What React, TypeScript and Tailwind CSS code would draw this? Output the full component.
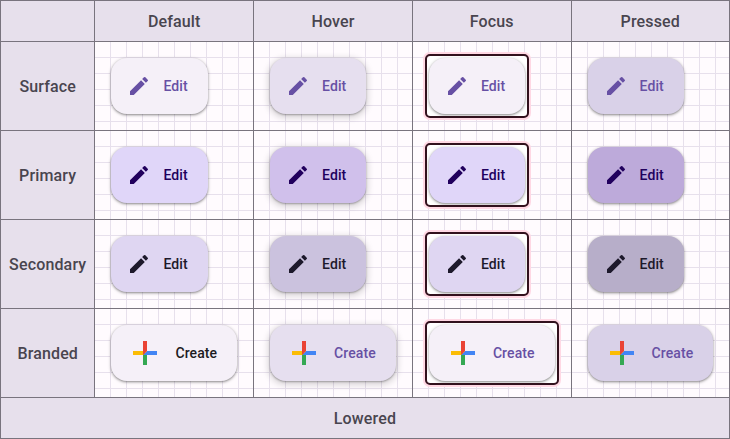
import React from "react";

type Variant = { row: string; bg: string[]; text: string[]; label: string; branded?: boolean };

const states = ["Default", "Hover", "Focus", "Pressed"];
const lowered = "shadow-[0_1px_2px_0_rgba(0,0,0,0.3),0_1px_3px_1px_rgba(0,0,0,0.15)]";
const raised = "shadow-[0_1px_2px_0_rgba(0,0,0,0.3),0_2px_6px_2px_rgba(0,0,0,0.15)]";
const purple = "text-[#6750a4]";
const deep = "text-[#21005d]";
const dark = "text-[#1d192b]";
const ink = "text-[#1c1b1f]";

const variants: Variant[] = [
  { row: "Surface", label: "Edit", bg: ["bg-[#f5f0f8]", "bg-[#e6dfef]", "bg-[#f5f0f8]", "bg-[#d9d1e8]"], text: [purple, purple, purple, purple] },
  { row: "Primary", label: "Edit", bg: ["bg-[#e0d6f9]", "bg-[#d0c0eb]", "bg-[#e0d6f9]", "bg-[#bdaada]"], text: [deep, deep, deep, deep] },
  { row: "Secondary", label: "Edit", bg: ["bg-[#dfd6f2]", "bg-[#cbc2de]", "bg-[#dfd6f2]", "bg-[#b7aec9]"], text: [dark, dark, dark, dark] },
  { row: "Branded", label: "Create", branded: true, bg: ["bg-[#f5f0f8]", "bg-[#e6dfef]", "bg-[#f5f0f8]", "bg-[#d9d1e8]"], text: [ink, purple, purple, purple] },
];

function Pencil() {
  return (
    <svg className="size-6 shrink-0" viewBox="0 0 24 24" fill="currentColor">
      <path d="M3 17.25V21h3.75L17.81 9.94l-3.75-3.75L3 17.25zM20.71 7.04a.996.996 0 0 0 0-1.41l-2.34-2.34a.996.996 0 0 0-1.41 0l-1.83 1.83 3.75 3.75 1.83-1.83z" />
    </svg>
  );
}

function Plus() {
  return (
    <svg className="size-9 shrink-0" viewBox="0 0 36 36">
      <path fill="#34A853" d="M16 16v14h4V20z" />
      <path fill="#4285F4" d="M30 16H20l-4 4h14z" />
      <path fill="#FBBC05" d="M6 16v4h10l4-4z" />
      <path fill="#EA4335" d="M20 16V6h-4v14z" />
    </svg>
  );
}

function Fab({ v, state }: { v: Variant; state: number }) {
  const focus = state === 2;
  return (
    <div className={focus ? "-m-0.5 rounded-[3px] bg-white p-0.5 outline-2 outline-[#31111d] shadow-[0_0_0_4px_#ffd8e4]" : ""}>
      <button className={`flex h-14 items-center gap-3 rounded-2xl pr-5 pl-4 text-sm font-medium tracking-[0.1px] ${state === 1 ? raised : lowered} ${v.bg[state]} ${v.text[state]}`}>
        {v.branded ? <Plus /> : <Pencil />}
        {v.label}
      </button>
    </div>
  );
}

const heading = "flex items-center justify-center bg-[#e7e0ec] pt-0.5";

export default function App() {
  return (
    <div className="grid h-[439px] w-[730px] grid-cols-[93.45px_157.65px_157.8px_157.7px_157.4px] grid-rows-[40px_88px_88px_88px_88px_40px] gap-px border border-[#79747e] bg-[#79747e] font-['Roboto',sans-serif] text-base font-medium tracking-[0.15px] text-[#49454f]">
      <div className={heading} />
      {states.map((s) => <div key={s} className={heading}>{s}</div>)}
      {variants.map((v) => (
        <React.Fragment key={v.row}>
          <div className={heading}>{v.row}</div>
          {states.map((s, i) => (
            <div key={s} className="flex items-start bg-[#fffbfe] bg-[linear-gradient(to_right,transparent_15px,#e7e0ec_15px),linear-gradient(to_bottom,transparent_15px,#e7e0ec_15px)] bg-[length:16px_16px] p-4">
              <Fab v={v} state={i} />
            </div>
          ))}
        </React.Fragment>
      ))}
      <div className={`${heading} col-span-5`}>Lowered</div>
    </div>
  );
}
